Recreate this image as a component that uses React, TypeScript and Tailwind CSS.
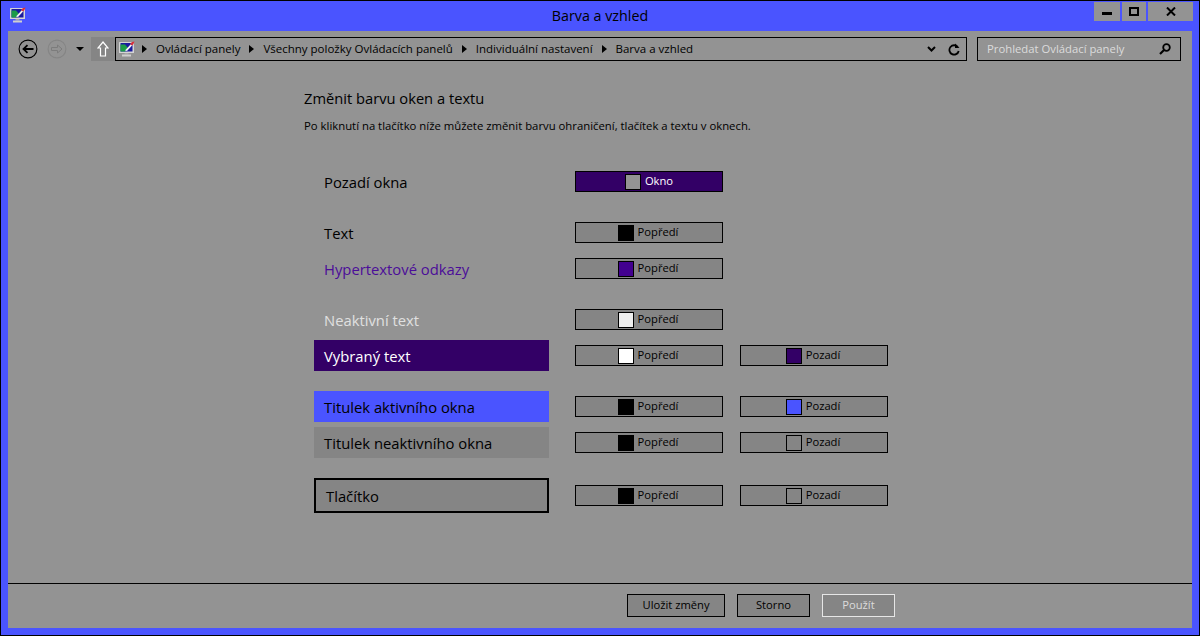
const FONT = "font-['Open_Sans','Noto_Sans',sans-serif]";

function MonitorIcon() {
  return (
    <svg width="16" height="16" viewBox="0 0 16 16" className="shrink-0">
      <rect x="0" y="1" width="15" height="11" rx="0.5" fill="#d4d4d4" />
      <rect x="1.5" y="2" width="12" height="8.5" fill="#1a1a9e" />
      <path d="M1.5 10.5V3.5L6 3.5L9 7L6 10.5Z" fill="#1c9c48" />
      <path d="M6 9.5L12 3L13.5 4L8 10Z" fill="#f4f4f4" />
      <path d="M11 3L13 1L15.5 0.5L14.5 3L13 4.5Z" fill="#d92f3a" />
      <rect x="5.5" y="12" width="4" height="1.5" fill="#a8a8a8" />
      <rect x="3" y="13.5" width="9" height="2" fill="#cfcfcf" />
    </svg>
  );
}

function Caret() {
  return (
    <svg width="5" height="8" viewBox="0 0 5 8" className="shrink-0">
      <path d="M0 0L5 4L0 8Z" fill="#000" />
    </svg>
  );
}

function ColorButton({ swatch, label, active }: { swatch: string; label: string; active?: boolean }) {
  return (
    <div
      className={`flex h-[21px] w-[148px] items-center justify-center gap-1 border border-black text-[11.2px] ${
        active ? "bg-[#330066] text-white" : "bg-[#858585] pr-[2px] text-black"
      }`}
    >
      <div className="h-4 w-4 border border-black" style={{ backgroundColor: swatch }} />
      <span>{label}</span>
    </div>
  );
}

function Row({
  label,
  labelClass,
  height,
  fore,
  back,
  mt,
}: {
  label: string;
  labelClass?: string;
  height?: string;
  fore: string;
  back?: string;
  mt: string;
}) {
  return (
    <div className={`flex items-center ${mt}`}>
      <div className={`flex w-[235px] items-center px-[10px] pt-[2px] text-[14.8px] ${height || "h-[31px]"} ${labelClass || "text-black"}`}>
        {label}
      </div>
      <div className="ml-[26px]">
        <ColorButton swatch={fore} label="Popředí" />
      </div>
      {back && (
        <div className="ml-[17px]">
          <ColorButton swatch={back} label="Pozadí" />
        </div>
      )}
    </div>
  );
}

function FootButton({ label, width, disabled }: { label: string; width: string; disabled?: boolean }) {
  return (
    <div
      className={`flex h-[23px] items-center justify-center border bg-[#858585] text-[11.2px] ${width} ${
        disabled ? "border-[#e6e6e6] text-[#dcdcdc]" : "border-black text-black"
      }`}
    >
      {label}
    </div>
  );
}

export default function App() {
  return (
    <div className={`flex h-[636px] w-[1200px] flex-col overflow-hidden border border-black bg-[#4a54ff] ${FONT}`}>
      {/* Title bar */}
      <div className="flex h-[30px] shrink-0 items-start pl-[9px] pr-[6px]">
        <div className="mt-[6px]">
          <MonitorIcon />
        </div>
        <div className="flex-1 pl-[80px] pt-[5px] text-center text-[14.3px] leading-5 text-black">Barva a vzhled</div>
        <div className="mt-px flex gap-[2px]">
          <div className="flex h-[19px] w-[26px] items-center justify-center bg-[#939393]">
            <div className="mt-[4px] h-[3px] w-[10px] bg-black" />
          </div>
          <div className="flex h-[19px] w-[24px] items-center justify-center bg-[#939393]">
            <div className="h-[9px] w-[10px] border-2 border-black" />
          </div>
          <div className="flex h-[19px] w-[45px] items-center justify-center bg-[#939393]">
            <svg width="10" height="9" viewBox="0 0 10 9">
              <path d="M1 0.5L9 8.5M9 0.5L1 8.5" stroke="#000" strokeWidth="2" />
            </svg>
          </div>
        </div>
      </div>

      <div className="mx-[7px] flex min-h-0 flex-1 flex-col bg-[#939393]">
        {/* Navigation bar */}
        <div className="flex h-[30px] shrink-0 items-end pl-[10px] pr-[11px]">
          <div className="flex h-[24px] items-center">
            <svg width="20" height="20" viewBox="0 0 20 20" className="shrink-0">
              <circle cx="10" cy="10" r="8.9" fill="none" stroke="#000" strokeWidth="1.1" />
              <path d="M15.5 10H6M9.5 6.2L5.5 10L9.5 13.8" fill="none" stroke="#000" strokeWidth="1.8" />
            </svg>
            <svg width="20" height="20" viewBox="0 0 20 20" className="ml-[9px] shrink-0">
              <circle cx="10" cy="10" r="8.9" fill="none" stroke="#858585" strokeWidth="1.1" />
              <path d="M4.5 8.5H10.5V6L15 10L10.5 14V11.5H4.5Z" fill="none" stroke="#7c7c7c" />
            </svg>
            <svg width="8" height="4" viewBox="0 0 8 4" className="ml-[9px] shrink-0">
              <path d="M0 0H8L4 4Z" fill="#000" />
            </svg>
            <div className="ml-[7px] flex h-[24px] w-[24px] items-center justify-center bg-[#858585]">
              <svg width="12" height="16" viewBox="0 0 12 16">
                <path d="M6 1L11 7H8.5V15H3.5V7H1Z" fill="none" stroke="#fff" strokeWidth="1.2" />
              </svg>
            </div>
          </div>
          <div className="flex h-[24px] w-[852px] items-center border border-black pl-[3px] pr-[6px] text-[11.5px] text-black">
            <MonitorIcon />
            <div className="ml-[7px] flex flex-1 items-center gap-[9px]">
              <Caret />
              <span>Ovládací panely</span>
              <Caret />
              <span>Všechny položky Ovládacích panelů</span>
              <Caret />
              <span>Individuální nastavení</span>
              <Caret />
              <span>Barva a vzhled</span>
            </div>
            <svg width="9" height="6" viewBox="0 0 9 6" className="mr-[12px]">
              <path d="M1 1L4.5 4.5L8 1" fill="none" stroke="#000" strokeWidth="2" />
            </svg>
            <svg width="12" height="13" viewBox="0 0 12 13">
              <path d="M9.8 4A4.7 4.7 0 1 0 10.7 8" fill="none" stroke="#000" strokeWidth="1.8" />
              <path d="M7 0.5V5H11.5Z" fill="#000" />
            </svg>
          </div>
          <div className="ml-[10px] flex h-[24px] w-[204px] items-center justify-between border border-black pl-[9px] pr-[9px] text-[11.3px] text-[#dcdcdc]">
            <span>Prohledat Ovládací panely</span>
            <svg width="12" height="12" viewBox="0 0 12 12">
              <circle cx="7.5" cy="4.5" r="3.3" fill="none" stroke="#000" strokeWidth="1.8" />
              <path d="M5 7L1 11" stroke="#000" strokeWidth="2.2" />
            </svg>
          </div>
        </div>

        {/* Main content */}
        <div className="min-h-0 flex-1 pl-[296px]">
          <div className="pt-[27px] text-[14.7px] leading-5 text-black">Změnit barvu oken a textu</div>
          <div className="mt-[10px] text-[11.33px] leading-4 text-black">
            Po kliknutí na tlačítko níže můžete změnit barvu ohraničení, tlačítek a textu v oknech.
          </div>

          <div className="ml-[10px] mt-[32px]">
            <div className="flex items-center">
              <div className="flex h-[31px] w-[235px] items-center px-[10px] pt-[2px] text-[14.8px] text-black">Pozadí okna</div>
              <div className="ml-[26px]">
                <ColorButton swatch="#939393" label="Okno" active />
              </div>
            </div>
            <Row label="Text" fore="#000000" mt="mt-[20px]" />
            <Row label="Hypertextové odkazy" labelClass="text-[#4b0d99]" fore="#42008f" mt="mt-[5px]" />
            <Row label="Neaktivní text" labelClass="text-[#e0e0e0]" fore="#eeeeee" mt="mt-[20px]" />
            <Row label="Vybraný text" labelClass="bg-[#330066] text-white" fore="#ffffff" back="#330066" mt="mt-[5px]" />
            <Row label="Titulek aktivního okna" labelClass="bg-[#4a54ff] text-black" fore="#000000" back="#4a54ff" mt="mt-[20px]" />
            <Row label="Titulek neaktivního okna" labelClass="bg-[#858585] text-black" fore="#000000" back="#858585" mt="mt-[5px]" />
            <Row
              label="Tlačítko"
              labelClass="border-2 border-black bg-[#858585] text-black"
              height="h-[35px]"
              fore="#000000"
              back="#858585"
              mt="mt-[20px]"
            />
          </div>
        </div>

        {/* Footer */}
        <div className="flex h-[45px] shrink-0 justify-end gap-3 border-t border-black pr-[297px] pt-[10px]">
          <FootButton label="Uložit změny" width="w-[98px]" />
          <FootButton label="Storno" width="w-[73px]" />
          <FootButton label="Použít" width="w-[73px]" disabled />
        </div>
      </div>
      <div className="h-[7px] shrink-0" />
    </div>
  );
}
